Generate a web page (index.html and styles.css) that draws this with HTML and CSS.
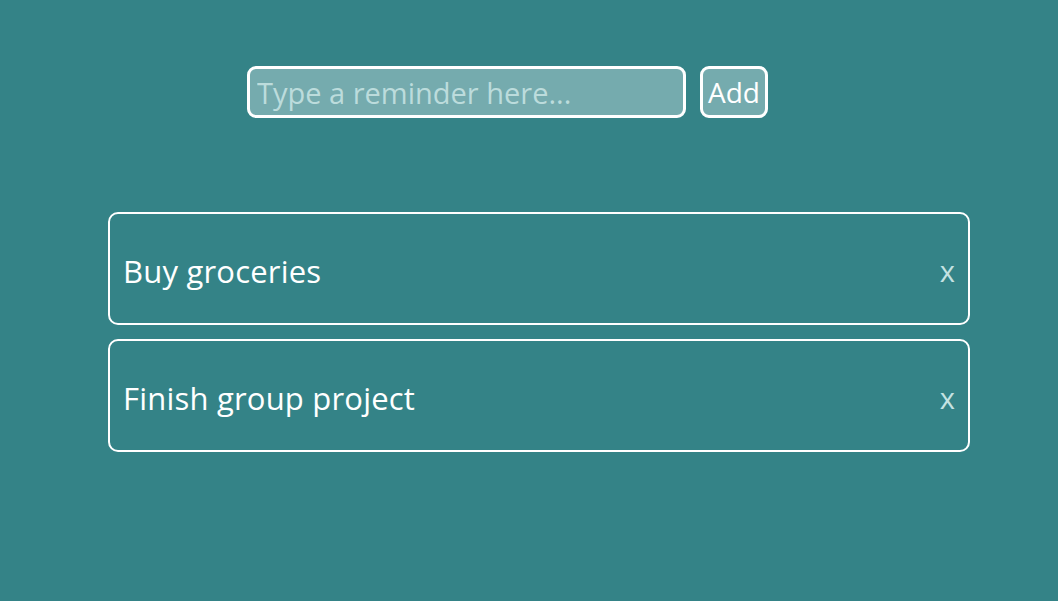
FILE: index.html
```html
<!DOCTYPE html>
<html lang="en">
<head>
<meta charset="utf-8">
<title>Reminders</title>
<link rel="stylesheet" href="styles.css">
</head>
<body>
<main class="app">
  <form class="entry">
    <input class="entry-input" type="text" placeholder="Type a reminder here...">
    <button class="entry-add" type="button">Add</button>
  </form>
  <ul class="list">
    <li class="item"><span class="item-text">Buy groceries</span><span class="item-remove">x</span></li>
    <li class="item"><span class="item-text">Finish group project</span><span class="item-remove">x</span></li>
  </ul>
</main>
</body>
</html>
```
FILE: styles.css
```css
* { box-sizing: border-box; }
html, body { margin: 0; padding: 0; }
body {
  background: #348387;
  width: 1058px;
  height: 601px;
  font-family: "Open Sans", "Noto Sans", sans-serif;
  color: #ffffff;
  overflow: hidden;
}
.app {
  display: flex;
  flex-direction: column;
  padding-top: 66px;
}
.entry {
  display: flex;
  gap: 14px;
  margin: 0 0 0 247px;
}
.entry-input {
  width: 439px;
  height: 52px;
  border: 3px solid #ffffff;
  border-radius: 9px;
  background: #75abae;
  color: #ffffff;
  font-family: inherit;
  font-size: 29px;
  padding: 0 7px;
  outline: none;
}
.entry-input::placeholder { color: #bcdcdc; }
.entry-add {
  width: 68px;
  height: 52px;
  border: 3px solid #ffffff;
  border-radius: 9px;
  background: #75abae;
  color: #ffffff;
  font-family: inherit;
  font-size: 28px;
  padding: 0;
}
.list {
  list-style: none;
  margin: 94px 0 0 108px;
  padding: 0;
  width: 862px;
  display: flex;
  flex-direction: column;
  gap: 14px;
}
.item {
  height: 113px;
  border: 2px solid #ffffff;
  border-radius: 10px;
  display: flex;
  align-items: center;
  justify-content: space-between;
  padding: 4px 13px 0 13px;
  font-size: 31px;
}
.item-text { letter-spacing: 0.2px; }
.item-remove {
  color: #c4e2e2;
  font-size: 29px;
}
```
